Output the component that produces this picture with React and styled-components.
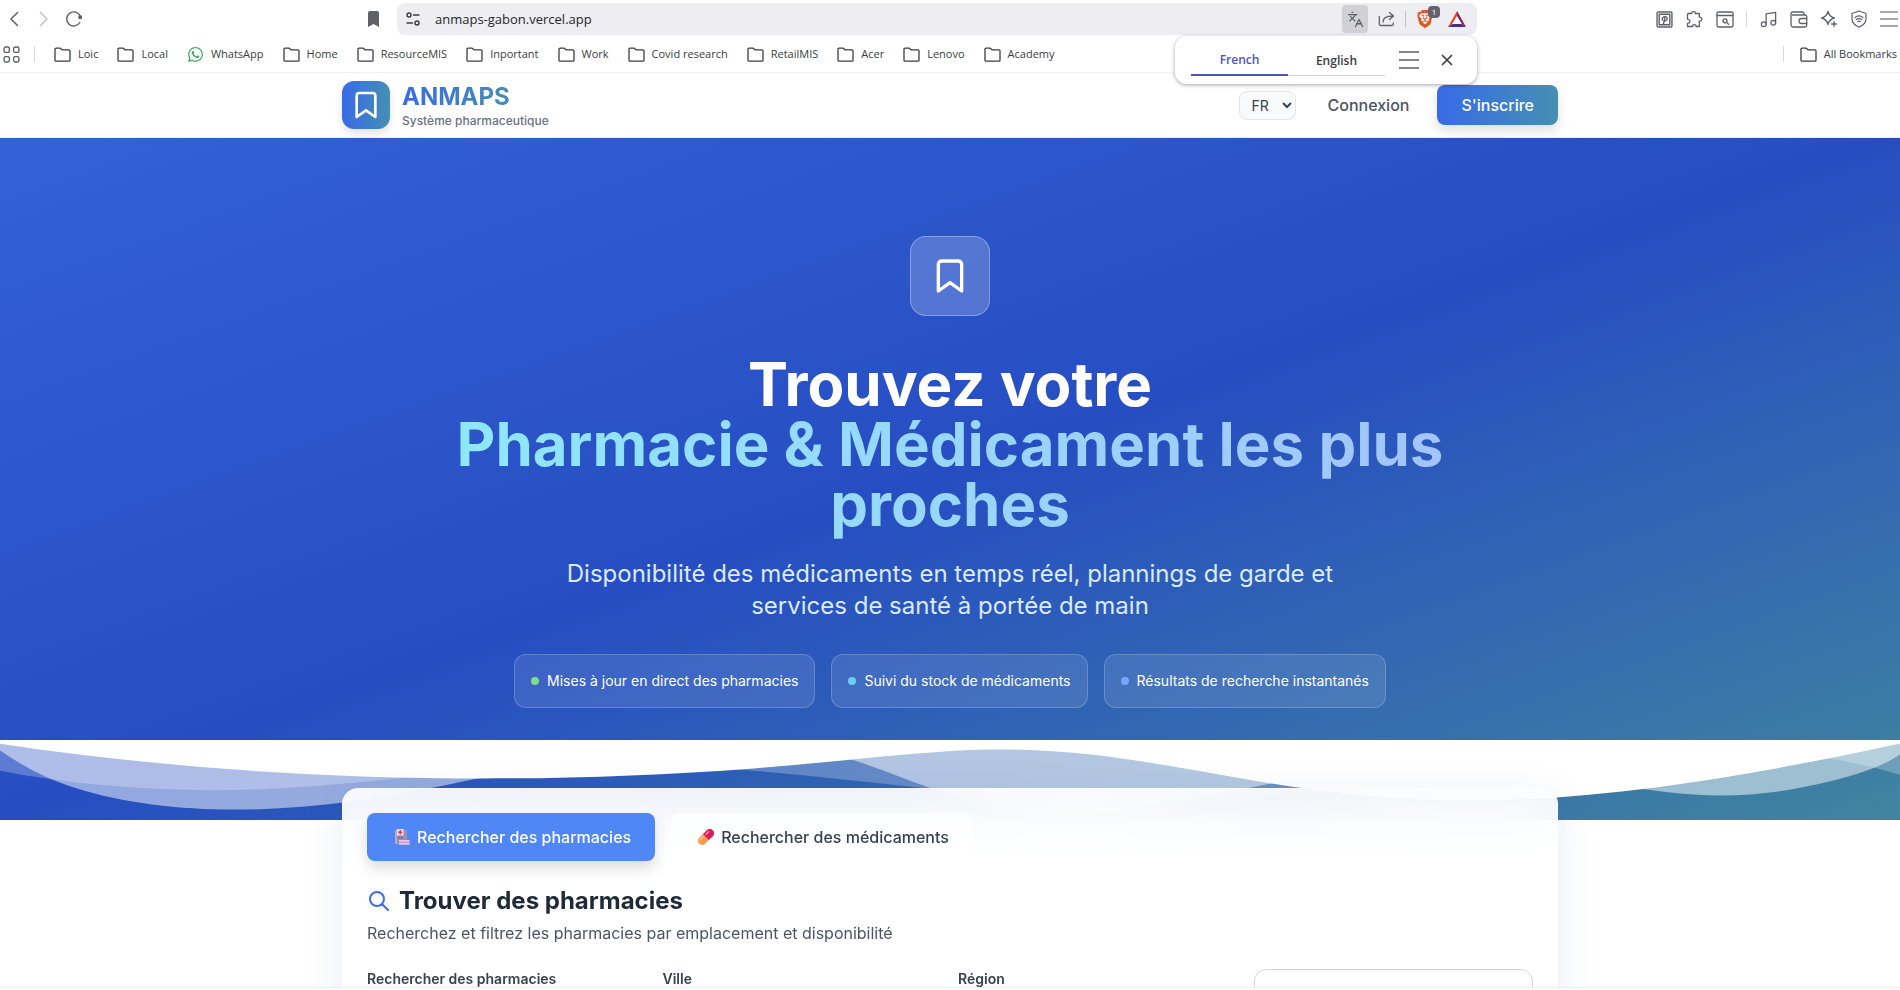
import React from "react";
import styled, { createGlobalStyle } from "styled-components";
import { FaWhatsapp } from "react-icons/fa";
import { SiBrave } from "react-icons/si";
import { Languages, Music } from "lucide-react";

const GlobalStyle = createGlobalStyle`
	* {
		box-sizing: border-box;
	}
	body {
		margin: 0;
		background: #fff;
		font-family: Inter, "Liberation Sans", sans-serif;
		color: #1f2937;
	}
	button,
	select {
		font-family: inherit;
	}
	svg {
		display: block;
		flex-shrink: 0;
	}
`;

const Window = styled.div`
	display: flex;
	flex-direction: column;
	height: 100vh;
	overflow: hidden;
`;

/* browser bars */

const Chrome = styled.div`
	flex-shrink: 0;
	border-bottom: 1px solid #f1f1f3;
	font-family: "Open Sans", "Noto Sans", sans-serif;
	color: #3b3c42;
`;
const Toolbar = styled.div`
	display: grid;
	grid-template-columns: 397fr 1080fr 423fr;
	align-items: center;
	height: 36px;
	padding-top: 2px;
`;
const ToolGroup = styled.div`
	display: flex;
	align-items: center;
	gap: ${(p) => p.$gap}px;
`;
const ToolStart = styled.div`
	display: flex;
	align-items: center;
	justify-content: space-between;
	padding: 0 17px 0 6px;
`;
const ToolEnd = styled.div`
	display: flex;
	align-items: center;
	justify-content: flex-end;
	gap: 12px;
	padding-right: 2px;
`;
const IconButton = styled.button`
	display: flex;
	align-items: center;
	justify-content: center;
	padding: 0;
	border: 0;
	background: none;
	color: ${(p) => p.$color || "#5f6068"};
	cursor: pointer;
`;
const Separator = styled.span`
	width: 1px;
	height: 16px;
	background: ${(p) => p.$color || "#d9d9dd"};
`;
const AddressBar = styled.div`
	position: relative;
	display: flex;
	align-items: center;
	gap: 14px;
	height: 32px;
	padding: 0 11px 0 8px;
	border-radius: 8px;
	background: #ededf2;
`;
const Address = styled.input`
	flex: 1;
	min-width: 0;
	padding: 0;
	border: 0;
	outline: 0;
	background: none;
	color: #26272b;
	font-family: inherit;
	font-size: 13px;
`;
const TranslateButton = styled(IconButton)`
	width: 26px;
	height: 28px;
	border-radius: 4px;
	background: #d0d0d5;
`;
const ShieldButton = styled(IconButton)`
	position: relative;
	width: 18px;
	margin-right: 4px;
`;
const ShieldBadge = styled.span`
	position: absolute;
	top: -4px;
	left: 12px;
	width: 12px;
	height: 12px;
	border-radius: 4px;
	background: #62636c;
	color: #fff;
	font-size: 8px;
	line-height: 12px;
	text-align: center;
`;
const TranslatePopup = styled.div`
	position: absolute;
	top: 33px;
	right: 0;
	z-index: 5;
	display: flex;
	align-items: center;
	width: 302px;
	height: 48px;
	padding: 0 22px 0 16px;
	border-radius: 12px;
	background: #fff;
	box-shadow: 0 1px 4px rgba(0, 0, 0, 0.35);
`;
const LangTab = styled.button`
	flex: 1;
	align-self: stretch;
	margin: 9px 0 8px;
	padding: 0;
	border: 0;
	border-bottom: ${(p) => (p.$active ? "2px solid #4c54b8" : "1px solid #d5d5da")};
	background: none;
	color: ${(p) => (p.$active ? "#4c54c8" : "#3b3c42")};
	font-size: 12px;
	font-weight: 600;
	cursor: pointer;
`;
const PopupActions = styled.div`
	display: flex;
	align-items: center;
	gap: 20px;
	margin-left: 14px;
`;

const BookmarksBar = styled.nav`
	display: flex;
	align-items: center;
	justify-content: space-between;
	height: 36px;
	padding: 0 3px;
`;
const Bookmark = styled.a`
	display: flex;
	align-items: center;
	gap: 7px;
	color: inherit;
	font-size: 11px;
	line-height: 16px;
	text-decoration: none;
	white-space: nowrap;
`;

/* site */

const Page = styled.div`
	flex: 1;
	min-height: 0;
	overflow: hidden;
	margin-bottom: 2px;
	border-bottom: 1px solid #ececee;
`;
const Container = styled.div`
	max-width: 1280px;
	margin: 0 auto;
	padding: 0 32px;
`;
const Header = styled.header`
	padding: 8px 0;
	border-bottom: 1px solid #eceef2;
	background: #fff;
`;
const HeaderRow = styled(Container)`
	display: flex;
	align-items: center;
	justify-content: space-between;
`;
const Brand = styled.a`
	display: flex;
	align-items: center;
	gap: 12px;
	text-decoration: none;
`;
const BrandMark = styled.span`
	display: flex;
	align-items: center;
	justify-content: center;
	width: 48px;
	height: 48px;
	border-radius: 12px;
	background: linear-gradient(to right, #386be8, #458fb3);
	color: #fff;
	box-shadow: 0 4px 8px rgba(0, 0, 0, 0.12);
`;
const BrandText = styled.span`
	display: flex;
	flex-direction: column;
	align-items: flex-start;
`;
const BrandName = styled.span`
	background: linear-gradient(to right, #386be8, #458fb3);
	background-clip: text;
	color: transparent;
	font-size: 24px;
	font-weight: 700;
	line-height: 32px;
`;
const BrandTag = styled.span`
	color: #6b7280;
	font-size: 12px;
	font-weight: 500;
	line-height: 16px;
`;
const HeaderActions = styled.div`
	display: flex;
	align-items: center;
	gap: 12px;
`;
const LanguageSelect = styled.select`
	width: 57px;
	height: 29px;
	padding: 0 0 0 8px;
	margin-right: 4px;
	border: 1px solid #e2e5ea;
	border-radius: 8px;
	background: #f9fafb;
	color: #374151;
	font-size: 14px;
`;
const LoginLink = styled.a`
	padding: 8px 16px;
	color: #4b5563;
	font-size: 16px;
	font-weight: 500;
	line-height: 24px;
	text-decoration: none;
`;
const SignUpButton = styled.button`
	padding: 8px 24px;
	border: 0;
	border-radius: 8px;
	background: linear-gradient(to right, #386be8, #458fb3);
	color: #fff;
	font-size: 16px;
	font-weight: 500;
	line-height: 24px;
	box-shadow: 0 6px 12px rgba(0, 0, 0, 0.12);
	cursor: pointer;
`;

const Hero = styled.section`
	display: flex;
	flex-direction: column;
	align-items: center;
	padding-top: 98px;
	background: linear-gradient(to bottom right, #3461d6, #264ec2 50%, #40849f);
	text-align: center;
`;
const HeroMark = styled.div`
	display: flex;
	align-items: center;
	justify-content: center;
	width: 80px;
	height: 80px;
	margin-bottom: 38px;
	border: 1px solid rgba(255, 255, 255, 0.3);
	border-radius: 16px;
	background: rgba(255, 255, 255, 0.2);
	color: #fff;
`;
const HeroTitle = styled.h1`
	max-width: 1024px;
	margin: 0 0 24px;
	color: #fff;
	font-size: 60px;
	font-weight: 700;
	line-height: 60px;
`;
const HeroAccent = styled.span`
	display: block;
	padding-bottom: 8px;
	margin-bottom: -8px;
	background: linear-gradient(to right, #8ee8fb, #a3c4fc);
	background-clip: text;
	color: transparent;
`;
const HeroText = styled.p`
	max-width: 768px;
	margin: 0 0 32px;
	color: #dbeafe;
	font-size: 24px;
	line-height: 32px;
`;
const Chips = styled.div`
	display: flex;
	flex-wrap: wrap;
	justify-content: center;
	gap: 16px;
	margin-bottom: 32px;
`;
const Chip = styled.div`
	display: flex;
	align-items: center;
	gap: 8px;
	padding: 16px;
	border: 1px solid rgba(255, 255, 255, 0.2);
	border-radius: 12px;
	background: rgba(255, 255, 255, 0.1);
	color: #fff;
	font-size: 14px;
	font-weight: 400;
	line-height: 20px;
`;
const Dot = styled.span`
	width: 8px;
	height: 8px;
	border-radius: 50%;
	background: ${(p) => p.$color};
`;
const Waves = styled.svg`
	width: 100%;
	height: 80px;
	fill: #fff;
`;

const SearchSection = styled(Container)`
	position: relative;
	margin-top: -32px;
`;
const SearchCard = styled.div`
	padding: 24px;
	border: 1px solid rgba(255, 255, 255, 0.3);
	border-radius: 16px;
	background: rgba(255, 255, 255, 0.92);
	backdrop-filter: blur(24px);
	box-shadow: 0 10px 40px rgba(40, 80, 160, 0.1);
`;
const Tabs = styled.div`
	display: flex;
	gap: 16px;
	margin-bottom: 24px;
`;
const Tab = styled.button`
	display: flex;
	align-items: center;
	gap: 4px;
	padding: 12px 24px;
	border: 0;
	border-radius: 8px;
	background: ${(p) => (p.$active ? "#4f87f6" : "rgba(255, 255, 255, 0.7)")};
	color: ${(p) => (p.$active ? "#fff" : "#374151")};
	box-shadow: ${(p) => (p.$active ? "0 8px 14px rgba(0, 0, 0, 0.13)" : "none")};
	font-size: 16px;
	font-weight: 500;
	line-height: 24px;
	cursor: pointer;
`;
const SearchTitle = styled.h2`
	display: flex;
	align-items: center;
	gap: 8px;
	margin: 0 0 4px;
	color: #1f2937;
	font-size: 24px;
	font-weight: 700;
	line-height: 32px;
`;
const SearchHint = styled.p`
	margin: 0 0 24px;
	color: #4b5563;
	font-size: 16px;
	line-height: 24px;
`;
const Filters = styled.form`
	display: grid;
	grid-template-columns: repeat(4, 1fr);
	gap: 16px;
`;
const Field = styled.label`
	display: flex;
	flex-direction: column;
	gap: 8px;
	color: #374151;
	font-size: 14px;
	font-weight: 600;
	line-height: 20px;
`;
const FieldInput = styled.input`
	height: 48px;
	padding: 0 16px;
	border: 1px solid #d1d5db;
	border-radius: 12px;
	font-size: 16px;
`;
const FilterButton = styled.button`
	height: 76px;
	border: 1px solid #d1d5db;
	border-radius: 12px;
	background: #fff;
`;

const Line = ({ size = 16, width, height, stroke = 1.3, box = "0 0 16 16", children }) => (
	<svg
		width={width || size}
		height={height || size}
		viewBox={box}
		fill="none"
		stroke="currentColor"
		strokeWidth={stroke}
		strokeLinecap="round"
		strokeLinejoin="round"
		aria-hidden="true"
	>
		{children}
	</svg>
);

const FolderIcon = () => (
	<Line width={17} height={15} box="0 0 17 15">
		<path d="M1 13.2V2.2a1 1 0 0 1 1-1h4.2l1.8 1.6h7a1 1 0 0 1 1 1v9.4a1 1 0 0 1-1 1H2a1 1 0 0 1-1-1z" />
	</Line>
);

const BookmarkIcon = ({ size }) => (
	<Line size={size} stroke={2} box="0 0 24 24">
		<path d="M19 21l-7-5-7 5V5a2 2 0 0 1 2-2h10a2 2 0 0 1 2 2z" />
	</Line>
);

const MenuIcon = ({ width, gap }) => (
	<Line width={width} height={18} box={`0 0 ${width} 18`} stroke={1.5}>
		<path d={`M0 ${9 - gap}h${width}M0 9h${width}M0 ${9 + gap}h${width}`} />
	</Line>
);

const HospitalIcon = () => (
	<svg width="22" height="18" viewBox="0 0 22 18" aria-hidden="true">
		<path d="M5 1.500h8.500l2.500 1.500v13H5z" fill="#9a8fb5" />
		<path d="M4 2.500h2v13.500H4z" fill="#b9a9c8" />
		<path d="M6 1h6.500v6.500H6z" fill="#f3dcec" />
		<path d="M9.200 2v4.500M7.200 4.200h4" stroke="#d8336b" strokeWidth="1.400" />
		<path d="M6.500 9h6M6.500 10.500h6" stroke="#766a99" strokeWidth=".8" />
		<path d="M8 12h10.500v5H8z" fill="#e6c8f4" />
		<path d="M8 14.200h10.500" stroke="#a77bd0" strokeWidth=".8" />
		<path d="M8 16.500h10.500" stroke="#c5b2d6" />
	</svg>
);

const PillIcon = () => (
	<svg width="22" height="18" viewBox="0 0 22 18" aria-hidden="true">
		<g transform="rotate(-44 11 9)">
			<rect x="1.500" y="4.800" width="19" height="8.400" rx="4.200" fill="#f59a4c" />
			<path d="M11 4.800h5.300a4.200 4.200 0 0 1 0 8.400H11z" fill="#d81f5c" />
			<path d="M4.500 7h5" stroke="#fbc48a" strokeWidth="1.400" strokeLinecap="round" />
			<path d="M13 7h3.500" stroke="#f58bb4" strokeWidth="1.400" strokeLinecap="round" />
		</g>
	</svg>
);

const bookmarks = [
	"Loic",
	"Local",
	"WhatsApp",
	"Home",
	"ResourceMIS",
	"Inportant",
	"Work",
	"Covid research",
	"RetailMIS",
	"Acer",
	"Lenovo",
	"Academy",
];

const chips = [
	{ text: "Mises à jour en direct des pharmacies", color: "#7fdc8a" },
	{ text: "Suivi du stock de médicaments", color: "#6bcdf0" },
	{ text: "Résultats de recherche instantanés", color: "#78a6fa" },
];

const BrowserChrome = () => {
	return (
		<Chrome>
			<Toolbar>
				<ToolStart>
					<ToolGroup $gap={14}>
						<IconButton aria-label="Back">
							<Line stroke={1.5}>
								<path d="M11.500 1.500L5 8l6.500 6.500" />
							</Line>
						</IconButton>
						<IconButton aria-label="Forward" $color="#c3c3c8">
							<Line stroke={1.5}>
								<path d="M4.500 1.500L11 8l-6.500 6.500" />
							</Line>
						</IconButton>
						<IconButton aria-label="Reload">
							<Line stroke={1.4}>
								<path d="M13.800 11.500A7 7 0 1 1 14.500 6" />
								<circle cx="14.200" cy="6.200" r="1.300" fill="currentColor" />
							</Line>
						</IconButton>
					</ToolGroup>
					<IconButton aria-label="Bookmark this page">
						<svg width="13" height="18" viewBox="0 0 13 18" fill="currentColor">
							<path d="M1 3a2 2 0 0 1 2-2h7a2 2 0 0 1 2 2v14l-5.500-3L1 17z" />
						</svg>
					</IconButton>
				</ToolStart>
				<AddressBar>
					<Line stroke={1.4}>
						<circle cx="4" cy="4" r="2" />
						<path d="M8.500 4H14M2 12h5.500" />
						<circle cx="12" cy="12" r="2" />
					</Line>
					<Address aria-label="Address" defaultValue="anmaps-gabon.vercel.app" />
					<ToolGroup $gap={10}>
						<TranslateButton aria-label="Translate">
							<Languages size={17} strokeWidth={1.800} />
						</TranslateButton>
						<IconButton aria-label="Share">
							<Line width={17}>
								<path d="M.8 5.500V13a1.500 1.500 0 0 0 1.500 1.500h11A1.500 1.500 0 0 0 14.800 13v-1" />
								<path d="M4.500 11c0-4 3-6 10-6M11 1.500L15 5l-4 3.500" />
							</Line>
						</IconButton>
						<Separator $color="#bfbfc6" />
						<ShieldButton aria-label="Shields">
							<SiBrave size={18} color="#e3571c" />
							<ShieldBadge>1</ShieldBadge>
						</ShieldButton>
						<IconButton aria-label="Rewards">
							<svg width="18" height="16" viewBox="0 0 18 16">
								<path d="M9 0L0 16l4.500-3L9 5.500z" fill="#e8482c" />
								<path d="M9 0l9 16-4.500-3L9 5.500z" fill="#8c1d5c" />
								<path d="M0 16h18l-4.500-3h-9z" fill="#4a2c8f" />
								<path d="M9 5l4.800 8H4.200z" fill="#fff" />
							</svg>
						</IconButton>
					</ToolGroup>
					<TranslatePopup>
						<LangTab $active>French</LangTab>
						<LangTab>English</LangTab>
						<PopupActions>
							<IconButton aria-label="Options">
								<MenuIcon width={20} gap={8} />
							</IconButton>
							<IconButton aria-label="Close" $color="#3b3c42">
								<Line stroke={1.700}>
									<path d="M3.500 3.500l9 9M12.500 3.500l-9 9" />
								</Line>
							</IconButton>
						</PopupActions>
					</TranslatePopup>
				</AddressBar>
				<ToolEnd>
					<IconButton aria-label="Pinterest">
						<Line size={17}>
							<rect x="1" y="1" width="14" height="14" rx="1" />
							<rect x="3" y="3" width="10" height="10" />
							<path d="M6 8.500C5 5 11 4 10.500 7.500 10 10 7.500 9.500 7.500 8.800M8.400 6.500L7 12" />
						</Line>
					</IconButton>
					<IconButton aria-label="Extensions">
						<Line size={19} box="0 0 19 19">
							<path d="M3.500 3.500h3.200c-.6-2.600 4.200-2.600 3.600 0h4v3.600c3.400-.6 3.400 4.600 0 4v5.400h-3.200c.4-2.600-3.800-2.600-3.400 0H2.500v-3.200c3.200.2 3.200-4.200 0-4V4.500a1 1 0 0 1 1-1z" />
						</Line>
					</IconButton>
					<IconButton aria-label="Search tabs">
						<Line width={18} height={17} box="0 0 18 17">
							<rect x="1" y="1" width="16" height="15" rx="1.500" />
							<path d="M1 4.500h16M10.800 11.600l1.700 1.600" />
							<circle cx="9" cy="9.800" r="2" />
						</Line>
					</IconButton>
					<Separator />
					<IconButton aria-label="Playlist">
						<Music size={19} strokeWidth={1.600} />
					</IconButton>
					<IconButton aria-label="Wallet">
						<Line width={18} height={17} box="0 0 18 17">
							<path d="M14 4V2.500A1.500 1.500 0 0 0 12.500 1h-10A1.500 1.500 0 0 0 1 2.500v11A2.500 2.500 0 0 0 3.500 16h11.700a1.500 1.500 0 0 0 1.500-1.500v-9A1.500 1.500 0 0 0 15.200 4H2.500" />
							<path d="M16.700 7.500H11.500a2.500 2.500 0 0 0 0 5h5.200" />
						</Line>
					</IconButton>
					<IconButton aria-label="Leo">
						<Line size={18} box="0 0 18 18">
							<path d="M8 1.500c.8 3.800 2.500 5.500 6.500 6.500-4 1-5.700 2.700-6.500 6.500C7.200 10.700 5.500 9 1.500 8 5.500 7 7.200 5.300 8 1.500zM14 11.500v5M11.500 14h5" />
						</Line>
					</IconButton>
					<IconButton aria-label="VPN">
						<Line size={18} box="0 0 18 18" stroke={1.200}>
							<path d="M9 1l7 2.500V9c0 4-3 6.500-7 8.200C5 15.500 2 13 2 9V3.500z" />
							<path d="M5 7.500c2.500-2 5.500-2 8 0M6.200 9.600c1.800-1.300 3.800-1.300 5.600 0M7.600 11.500c1-.6 1.800-.6 2.800 0" />
						</Line>
					</IconButton>
					<IconButton aria-label="Menu" $color="#8a8b92">
						<MenuIcon width={18} gap={7} />
					</IconButton>
				</ToolEnd>
			</Toolbar>
			<BookmarksBar aria-label="Bookmarks">
				<ToolGroup $gap={19}>
					<ToolGroup $gap={14}>
						<IconButton aria-label="Apps">
							<Line size={17}>
								<rect x="1" y="1" width="5" height="5" rx="1.500" />
								<rect x="10" y="1" width="5" height="5" rx="1.500" />
								<rect x="1" y="10" width="5" height="5" rx="1.500" />
								<rect x="10" y="10" width="5" height="5" rx="1.500" />
							</Line>
						</IconButton>
						<Separator />
					</ToolGroup>
					{bookmarks.map((name) => (
						<Bookmark href="#" key={name}>
							{name === "WhatsApp" ? <FaWhatsapp size={17} color="#43a85c" /> : <FolderIcon />}
							{name}
						</Bookmark>
					))}
				</ToolGroup>
				<ToolGroup $gap={16}>
					<Separator />
					<Bookmark href="#">
						<FolderIcon />
						All Bookmarks
					</Bookmark>
				</ToolGroup>
			</BookmarksBar>
		</Chrome>
	);
};

const App = () => {
	return (
		<Window>
			<GlobalStyle />
			<BrowserChrome />
			<Page>
				<Header>
					<HeaderRow>
						<Brand href="#">
							<BrandMark>
								<BookmarkIcon size={32} />
							</BrandMark>
							<BrandText>
								<BrandName>ANMAPS</BrandName>
								<BrandTag>Système pharmaceutique</BrandTag>
							</BrandText>
						</Brand>
						<HeaderActions>
							<LanguageSelect aria-label="Langue" defaultValue="fr">
								<option value="fr">FR</option>
								<option value="en">EN</option>
							</LanguageSelect>
							<LoginLink href="#">Connexion</LoginLink>
							<SignUpButton>S'inscrire</SignUpButton>
						</HeaderActions>
					</HeaderRow>
				</Header>
				<Hero>
					<HeroMark>
						<BookmarkIcon size={40} />
					</HeroMark>
					<HeroTitle>
						Trouvez votre
						<HeroAccent>Pharmacie &amp; Médicament les plus proches</HeroAccent>
					</HeroTitle>
					<HeroText>
						Disponibilité des médicaments en temps réel, plannings de garde et services de santé à
						portée de main
					</HeroText>
					<Chips>
						{chips.map((chip) => (
							<Chip key={chip.text}>
								<Dot $color={chip.color} />
								{chip.text}
							</Chip>
						))}
					</Chips>
					<Waves viewBox="0 0 1200 120" preserveAspectRatio="none" aria-hidden="true">
						<path
							opacity=".25"
							d="M0,0V46.29c47.79,22.2,103.59,32.17,158,28,70.36-5.37,136.33-33.31,206.8-37.5C438.64,32.43,512.34,53.67,583,72.05c69.27,18,138.3,24.88,209.4,13.08,36.15-6,69.85-17.84,104.45-29.34C989.49,25,1113-14.29,1200,52.47V0Z"
						/>
						<path
							opacity=".5"
							d="M0,0V15.81C13,36.92,27.64,56.86,47.69,72.05,99.41,111.27,165,111,224.58,91.58c31.15-10.15,60.09-26.07,89.67-39.8,40.92-19,84.73-46,130.83-49.67,36.26-2.85,70.9,9.42,98.6,31.56,31.77,25.39,62.32,62,103.63,73,40.44,10.79,81.35-6.69,119.13-24.28s75.16-39,116.92-43.05c59.73-5.85,113.28,22.88,168.9,38.84,30.2,8.66,59,6.17,87.09-7.5,22.43-10.89,48-26.93,60.65-49.24V0Z"
						/>
						<path d="M0,0V5.63C149.93,59,314.09,71.32,475.83,42.57c43-7.64,84.23-20.12,127.61-26.46,59-8.63,112.48,12.24,165.56,35.4C827.93,77.22,886,95.24,951.2,90c86.53-7,172.46-45.71,248.8-84.81V0Z" />
					</Waves>
				</Hero>
				<SearchSection>
					<SearchCard>
						<Tabs>
							<Tab $active>
								<HospitalIcon />
								Rechercher des pharmacies
							</Tab>
							<Tab>
								<PillIcon />
								Rechercher des médicaments
							</Tab>
						</Tabs>
						<SearchTitle>
							<svg
								width="24"
								height="24"
								viewBox="0 0 24 24"
								fill="none"
								stroke="#3b6fe8"
								strokeWidth="2"
								strokeLinecap="round"
								aria-hidden="true"
							>
								<path d="M21 21l-6-6m2-5a7 7 0 11-14 0 7 7 0 0114 0z" />
							</svg>
							Trouver des pharmacies
						</SearchTitle>
						<SearchHint>Recherchez et filtrez les pharmacies par emplacement et disponibilité</SearchHint>
						<Filters>
							<Field>
								Rechercher des pharmacies
								<FieldInput type="text" />
							</Field>
							<Field>
								Ville
								<FieldInput type="text" />
							</Field>
							<Field>
								Région
								<FieldInput type="text" />
							</Field>
							<FilterButton type="button" aria-label="Filtres" />
						</Filters>
					</SearchCard>
				</SearchSection>
			</Page>
		</Window>
	);
};

export default App;
